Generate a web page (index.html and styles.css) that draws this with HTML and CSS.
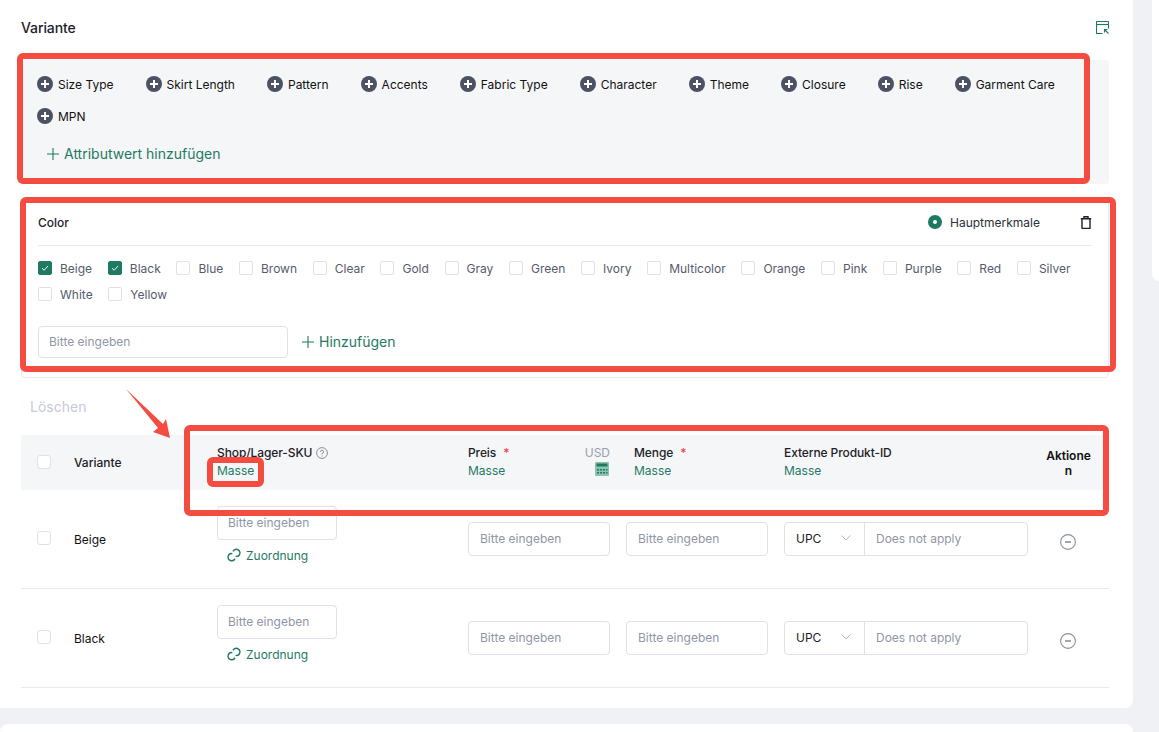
FILE: index.html
```html
<!DOCTYPE html>
<html lang="de">
  <head>
    <meta charset="UTF-8" />
    <meta name="viewport" content="width=device-width, initial-scale=1.0" />
    <title>Variante</title>
    <link rel="stylesheet" href="styles.css">
  </head>
  <body>
    <div class="page">
      <div class="main-col">
        <section class="card">
          <div class="card-head">
            <h2>Variante</h2>
            <svg class="head-icon" viewBox="0 0 13 13" fill="none" stroke="#1f7a63" stroke-width="1.1">
              <path d="M6.5 12.5H1a.5.5 0 0 1-.5-.5V1A.5.5 0 0 1 1 .5h11a.5.5 0 0 1 .5.5v6.5" />
              <path d="M.5 3.5h12" />
              <path d="M12.5 12.5 8.5 8.5M8.5 11.5v-3h3" />
            </svg>
          </div>

          <div class="attr-panel">
            <div class="attr-list">
              <span class="attr"><svg class="plus-dot" viewBox="0 0 16 16"><circle cx="8" cy="8" r="8" /><path d="M8 4v8M4 8h8" /></svg>Size Type</span>
              <span class="attr"><svg class="plus-dot" viewBox="0 0 16 16"><circle cx="8" cy="8" r="8" /><path d="M8 4v8M4 8h8" /></svg>Skirt Length</span>
              <span class="attr"><svg class="plus-dot" viewBox="0 0 16 16"><circle cx="8" cy="8" r="8" /><path d="M8 4v8M4 8h8" /></svg>Pattern</span>
              <span class="attr"><svg class="plus-dot" viewBox="0 0 16 16"><circle cx="8" cy="8" r="8" /><path d="M8 4v8M4 8h8" /></svg>Accents</span>
              <span class="attr"><svg class="plus-dot" viewBox="0 0 16 16"><circle cx="8" cy="8" r="8" /><path d="M8 4v8M4 8h8" /></svg>Fabric Type</span>
              <span class="attr"><svg class="plus-dot" viewBox="0 0 16 16"><circle cx="8" cy="8" r="8" /><path d="M8 4v8M4 8h8" /></svg>Character</span>
              <span class="attr"><svg class="plus-dot" viewBox="0 0 16 16"><circle cx="8" cy="8" r="8" /><path d="M8 4v8M4 8h8" /></svg>Theme</span>
              <span class="attr"><svg class="plus-dot" viewBox="0 0 16 16"><circle cx="8" cy="8" r="8" /><path d="M8 4v8M4 8h8" /></svg>Closure</span>
              <span class="attr"><svg class="plus-dot" viewBox="0 0 16 16"><circle cx="8" cy="8" r="8" /><path d="M8 4v8M4 8h8" /></svg>Rise</span>
              <span class="attr"><svg class="plus-dot" viewBox="0 0 16 16"><circle cx="8" cy="8" r="8" /><path d="M8 4v8M4 8h8" /></svg>Garment Care</span>
              <span class="attr"><svg class="plus-dot" viewBox="0 0 16 16"><circle cx="8" cy="8" r="8" /><path d="M8 4v8M4 8h8" /></svg>MPN</span>
            </div>
            <div class="add-attr">
              <svg class="plus-line" viewBox="0 0 12 12"><path d="M6 0v12M0 6h12" /></svg>Attributwert hinzufügen
            </div>
          </div>

          <div class="color-panel">
            <div class="color-head">
              <strong>Color</strong>
              <div class="color-tools">
                <span class="radio"></span>
                <span class="radio-label">Hauptmerkmale</span>
                <svg class="trash" viewBox="0 0 12 13" fill="none" stroke="#1d2129" stroke-width="1.4">
                  <path d="M2 3v9a.5.5 0 0 0 .5.5h7A.5.5 0 0 0 10 12V3M.8 2.8h10.4M4 2.6V.8h4v1.8" />
                </svg>
              </div>
            </div>
            <div class="color-list">
              <label class="opt"><span class="box checked"><svg viewBox="0 0 14 14"><path d="M3.5 7.2 6 9.6l4.6-5" /></svg></span>Beige</label>
              <label class="opt"><span class="box checked"><svg viewBox="0 0 14 14"><path d="M3.5 7.2 6 9.6l4.6-5" /></svg></span>Black</label>
              <label class="opt"><span class="box"></span>Blue</label>
              <label class="opt"><span class="box"></span>Brown</label>
              <label class="opt"><span class="box"></span>Clear</label>
              <label class="opt"><span class="box"></span>Gold</label>
              <label class="opt"><span class="box"></span>Gray</label>
              <label class="opt"><span class="box"></span>Green</label>
              <label class="opt"><span class="box"></span>Ivory</label>
              <label class="opt"><span class="box"></span>Multicolor</label>
              <label class="opt"><span class="box"></span>Orange</label>
              <label class="opt"><span class="box"></span>Pink</label>
              <label class="opt"><span class="box"></span>Purple</label>
              <label class="opt"><span class="box"></span>Red</label>
              <label class="opt"><span class="box"></span>Silver</label>
              <label class="opt"><span class="box"></span>White</label>
              <label class="opt"><span class="box"></span>Yellow</label>
            </div>
            <div class="color-add">
              <input class="field color-input" type="text" placeholder="Bitte eingeben" />
              <span class="add-value">
                <svg class="plus-line" viewBox="0 0 12 12"><path d="M6 0v12M0 6h12" /></svg>Hinzufügen
              </span>
            </div>
          </div>

          <div class="toolbar">Löschen</div>

          <div class="grid-row grid-head">
            <div class="cell-check"><span class="box box-lg"></span></div>
            <div class="th-variant">Variante</div>
            <div class="th">
              <div class="th-title">Shop/Lager-SKU
                <svg class="help" viewBox="0 0 12 12" fill="none" stroke="#8a8f9c">
                  <circle cx="6" cy="6" r="5.4" />
                  <path d="M4.4 4.8A1.6 1.6 0 1 1 6 6.4v1M6 8.5v1" />
                </svg>
              </div>
              <a class="bulk">Masse</a>
            </div>
            <div class="th th-price">
              <div>
                <div class="th-title">Preis <span class="req">*</span></div>
                <a class="bulk">Masse</a>
              </div>
              <div class="price-side">
                <span>USD</span>
                <svg class="calc" viewBox="0 0 14 14">
                  <rect width="14" height="14" rx="1" fill="#8fc2ae" />
                  <rect x="1.5" y="1.5" width="11" height="3" fill="#1f7a63" />
                  <path d="M2 7h2v1.5H2zM5 7h2v1.5H5zM8 7h2v1.5H8zM11 7h1.5v1.5H11zM2 10h2v1.5H2zM5 10h2v1.5H5zM8 10h2v1.5H8zM11 10h1.5v1.5H11z" fill="#1f7a63" />
                </svg>
              </div>
            </div>
            <div class="th th-qty">
              <div class="th-title">Menge <span class="req">*</span></div>
              <a class="bulk">Masse</a>
            </div>
            <div class="th">
              <div class="th-title">Externe Produkt-ID</div>
              <a class="bulk">Masse</a>
            </div>
            <div class="th-actions">Aktionen</div>
          </div>

          <div class="grid-row body-row">
            <div class="cell-check"><span class="box box-lg"></span></div>
            <div class="variant-name">Beige</div>
            <div class="sku-cell">
              <input class="field sku-input" type="text" placeholder="Bitte eingeben" />
              <a class="map-link">
                <svg class="chain" viewBox="0 0 14 14" fill="none" stroke="#1f7a63" stroke-width="1.4">
                  <path d="M6 3.4A3.6 3.6 0 1 1 8.6 8.4" />
                  <path d="M8 10.6A3.6 3.6 0 1 1 5.4 5.6" />
                </svg>Zuordnung
              </a>
            </div>
            <div class="num-cell"><input class="field" type="text" placeholder="Bitte eingeben" /></div>
            <div class="num-cell"><input class="field" type="text" placeholder="Bitte eingeben" /></div>
            <div class="ext-cell">
              <span class="ext-select">UPC
                <svg class="chevron" viewBox="0 0 10 6" fill="none" stroke="#b4b8c3"><path d="m.5.5 4.5 4.5L9.5.5" /></svg>
              </span>
              <input class="ext-input" type="text" placeholder="Does not apply" />
            </div>
            <div class="action-cell">
              <svg class="minus" viewBox="0 0 16 16" fill="none" stroke="#8a909e" stroke-width="1.1">
                <circle cx="8" cy="8" r="7.4" /><path d="M5 8h6" stroke-width="1.6" />
              </svg>
            </div>
          </div>

          <div class="grid-row body-row">
            <div class="cell-check"><span class="box box-lg"></span></div>
            <div class="variant-name">Black</div>
            <div class="sku-cell">
              <input class="field sku-input" type="text" placeholder="Bitte eingeben" />
              <a class="map-link">
                <svg class="chain" viewBox="0 0 14 14" fill="none" stroke="#1f7a63" stroke-width="1.4">
                  <path d="M6 3.4A3.6 3.6 0 1 1 8.6 8.4" />
                  <path d="M8 10.6A3.6 3.6 0 1 1 5.4 5.6" />
                </svg>Zuordnung
              </a>
            </div>
            <div class="num-cell"><input class="field" type="text" placeholder="Bitte eingeben" /></div>
            <div class="num-cell"><input class="field" type="text" placeholder="Bitte eingeben" /></div>
            <div class="ext-cell">
              <span class="ext-select">UPC
                <svg class="chevron" viewBox="0 0 10 6" fill="none" stroke="#b4b8c3"><path d="m.5.5 4.5 4.5L9.5.5" /></svg>
              </span>
              <input class="ext-input" type="text" placeholder="Does not apply" />
            </div>
            <div class="action-cell">
              <svg class="minus" viewBox="0 0 16 16" fill="none" stroke="#8a909e" stroke-width="1.1">
                <circle cx="8" cy="8" r="7.4" /><path d="M5 8h6" stroke-width="1.6" />
              </svg>
            </div>
          </div>
        </section>

        <section class="card card-next"></section>
      </div>

      <aside class="side-card"></aside>

      <!-- red annotations drawn over the screenshot -->
      <div class="mark mark-attrs"></div>
      <div class="mark mark-color"></div>
      <div class="mark mark-head"></div>
      <div class="mark mark-bulk"></div>
      <svg class="mark-arrow" viewBox="0 0 60 60">
        <polygon points="6,5 43,40 46,35 50,54 33,48 38,44" fill="#f44c40" />
      </svg>
    </div>
  </body>
</html>
```

FILE: styles.css
```css
* {
  margin: 0;
  padding: 0;
  box-sizing: border-box;
}

html,
body {
  height: 732px;
  overflow: hidden;
}

body {
  font-family: Inter, "Noto Sans", sans-serif;
  font-size: 13px;
  color: #1d2129;
  background-color: #f0f1f5;
}

.page {
  position: relative;
  display: flex;
  height: 732px;
  overflow: hidden;
}

.main-col {
  width: 1133px;
  flex-shrink: 0;
}

.side-card {
  width: 30px;
  height: 281px;
  margin-left: 19px;
  background-color: white;
  border-bottom-left-radius: 8px;
}

.card {
  height: 708px;
  padding: 0 24px 0 21px;
  background-color: white;
  border-radius: 0 0 8px 0;
}

.card-next {
  margin-top: 16px;
  border-radius: 8px 8px 0 0;
}

.card-head {
  height: 60px;
  display: flex;
  justify-content: space-between;
  align-items: center;
  padding-bottom: 5px;
}

.card-head h2 {
  font-size: 14px;
  font-weight: 500;
  letter-spacing: -0.1px;
  margin-bottom: 1px;
}

.head-icon {
  width: 13px;
  height: 13px;
}

/* attribute chips */
.attr-panel {
  height: 124px;
  padding: 8px 16px;
  background-color: #f5f6f8;
  border-radius: 4px;
}

.attr-list {
  display: flex;
  flex-wrap: wrap;
  column-gap: 32px;
}

.attr {
  display: flex;
  align-items: center;
  gap: 5px;
  height: 32px;
  color: #111;
  font-size: 12px;
}

.plus-dot {
  width: 16px;
  height: 16px;
}

.plus-dot circle {
  fill: #4c5263;
}

.plus-dot path {
  stroke: white;
  stroke-width: 2;
}

.add-attr {
  display: flex;
  align-items: center;
  gap: 5px;
  height: 28px;
  margin-top: 8px;
  padding: 0 0 1px 10px;
  color: #1f7a63;
  font-size: 14px;
}

.plus-line {
  width: 12px;
  height: 12px;
  fill: none;
  stroke: #1f7a63;
  stroke-width: 1.1;
}

/* color panel */
.color-panel {
  height: 178px;
  margin-top: 16px;
  padding: 0 16px;
  border: 1px solid #e8e9ef;
  border-radius: 4px;
}

.color-head {
  height: 45px;
  padding-bottom: 2px;
  display: flex;
  justify-content: space-between;
  align-items: center;
  border-bottom: 1px solid #e8e9ef;
}

.color-head strong {
  font-size: 12px;
  font-weight: 500;
}

.color-tools {
  display: flex;
  align-items: center;
}

.radio {
  width: 14px;
  height: 14px;
  border: 5px solid #1f7a63;
  border-radius: 50%;
  background-color: white;
}

.radio-label {
  margin-left: 8px;
  font-size: 12px;
  color: #2a2f3a;
}

.trash {
  width: 12px;
  height: 13px;
  margin-left: 40px;
}

.color-list {
  display: flex;
  flex-wrap: wrap;
  column-gap: 15.7px;
  margin-top: 9px;
  width: 1040px;
}

.opt {
  display: flex;
  align-items: center;
  gap: 8px;
  height: 26px;
  font-size: 12px;
  color: #555b6b;
}

.box {
  display: block;
  width: 14px;
  height: 14px;
  flex-shrink: 0;
  background-color: white;
  border: 1px solid #dfe1e8;
  border-radius: 2px;
}

.box.checked {
  background-color: #1f7a63;
  border-color: #1f7a63;
}

.box svg {
  display: block;
  width: 12px;
  height: 12px;
  fill: none;
  stroke: white;
  stroke-width: 1.1;
}

.box-lg {
  border-radius: 3px;
}

.color-add {
  display: flex;
  align-items: center;
  margin-top: 19px;
}

.field {
  width: 100%;
  height: 34px;
  padding: 0 10px 2px;
  font-family: inherit;
  font-size: 12px;
  color: #1d2129;
  background-color: white;
  border: 1px solid #dfe1e8;
  border-radius: 4px;
}

.field::placeholder,
.ext-input::placeholder {
  color: #8f96a6;
  opacity: 1;
}

.color-input {
  width: 250px;
  height: 32px;
}

.add-value {
  display: flex;
  align-items: center;
  gap: 5px;
  margin-left: 14px;
  padding-bottom: 1px;
  color: #1f7a63;
  font-size: 14px;
}

.toolbar {
  height: 57px;
  padding-left: 9px;
  display: flex;
  align-items: center;
  color: #c8cad4;
  font-size: 14px;
}

/* variant table */
.grid-row {
  display: grid;
  grid-template-columns: 53px 143px 251px 158px 158px 244px 81px;
  align-items: center;
}

.grid-head {
  height: 55px;
  background-color: #f5f6f8;
}

.body-row {
  height: 99px;
  border-bottom: 1px solid #e8e9ef;
}

.cell-check {
  padding: 0 0 2px 16px;
}

.th-variant {
  font-size: 12px;
  font-weight: 500;
}

.th {
  align-self: start;
  padding-top: 10px;
  font-size: 12px;
  line-height: 16px;
}

.th-title {
  display: flex;
  align-items: center;
  gap: 4px;
  font-weight: 500;
  height: 16px;
  letter-spacing: -0.1px;
}

.help {
  width: 12px;
  height: 12px;
}

.req {
  margin-left: 3px;
  color: #f5424b;
}

.bulk {
  display: block;
  margin-top: 2px;
  color: #1f7a63;
}

.th-price {
  display: flex;
  justify-content: space-between;
  width: 142px;
}

.price-side {
  display: flex;
  flex-direction: column;
  align-items: flex-end;
  gap: 1px;
  color: #9aa0ad;
}

.calc {
  width: 14px;
  height: 14px;
  margin-right: 1px;
}

.th-qty {
  padding-left: 8px;
}

.th-actions {
  width: 48px;
  margin: 0 auto;
  text-align: center;
  font-size: 12px;
  font-weight: 600;
  line-height: 15px;
  word-break: break-all;
  color: #111;
}

.variant-name {
  font-size: 12px;
  color: #111;
}

.sku-cell {
  align-self: start;
  padding-top: 16px;
}

.sku-input {
  display: block;
  width: 120px;
}

.map-link {
  display: flex;
  align-items: center;
  gap: 5px;
  margin: 5px 0 0 10px;
  height: 20px;
  font-size: 12px;
  color: #1f7a63;
}

.chain {
  width: 14px;
  height: 14px;
}

.num-cell {
  width: 142px;
}

.num-cell .field {
  padding-left: 11px;
}

.ext-cell {
  display: flex;
  width: 244px;
  height: 34px;
  border: 1px solid #dfe1e8;
  border-radius: 4px;
}

.ext-select {
  display: flex;
  align-items: center;
  justify-content: space-between;
  width: 80px;
  flex-shrink: 0;
  padding: 0 13px 2px 11px;
  font-size: 12px;
  border-right: 1px solid #dfe1e8;
}

.chevron {
  width: 10px;
  height: 6px;
}

.ext-input {
  flex: 1;
  min-width: 0;
  padding: 0 11px 2px;
  font-family: inherit;
  font-size: 12px;
  border: none;
  background: transparent;
}

.action-cell {
  display: flex;
  justify-content: center;
  padding: 6px 1px 0 0;
}

.minus {
  width: 16px;
  height: 16px;
}

/* annotations */
.mark {
  position: absolute;
  border: 6px solid #f44c40;
  border-radius: 6px;
}

.mark-attrs {
  left: 17px;
  top: 53px;
  width: 1073px;
  height: 131px;
}

.mark-color {
  left: 20px;
  top: 197px;
  width: 1096px;
  height: 175px;
}

.mark-head {
  left: 184px;
  top: 425px;
  width: 925px;
  height: 91px;
}

.mark-bulk {
  left: 207px;
  top: 457px;
  width: 57px;
  height: 30px;
}

.mark-arrow {
  position: absolute;
  left: 120px;
  top: 384px;
  width: 60px;
  height: 60px;
}
```
